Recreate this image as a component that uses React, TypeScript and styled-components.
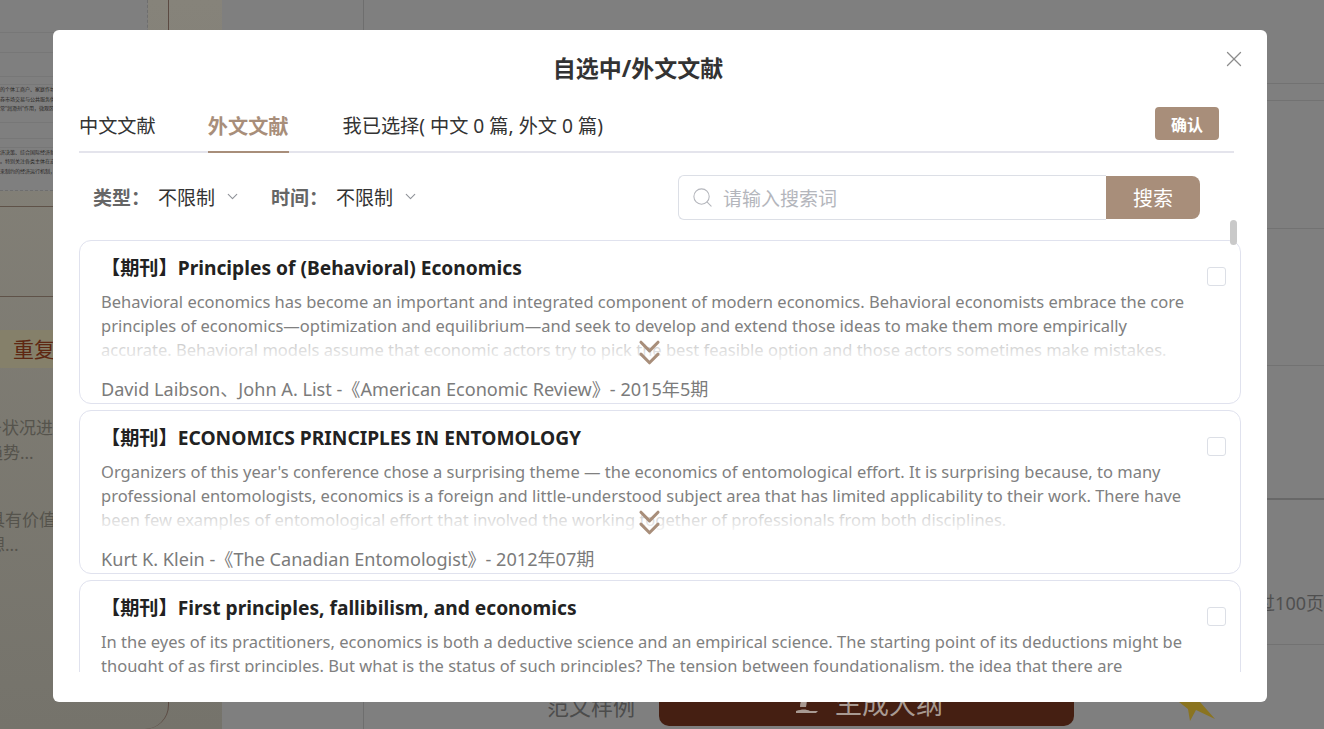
import styled, { createGlobalStyle } from "styled-components";
import { ChevronDown, ChevronsDown, Search, X } from "lucide-react";

const cnFont = `"Noto Sans", "Noto Sans CJK SC", sans-serif`;
const accent = "#a88e7a";

const GlobalStyle = createGlobalStyle`
  html, body { margin: 0; padding: 0; height: 100%; overflow: hidden; }
  body { font-family: ${cnFont}; background: #7f7f7f; }
  * { box-sizing: border-box; }
`;

type Article = {
  id: number;
  title: string;
  lines: string[];
  source: string;
  collapsed: boolean;
};

const articles: Article[] = [
  {
    id: 1,
    title: "【期刊】Principles of (Behavioral) Economics",
    lines: [
      "Behavioral economics has become an important and integrated component of modern economics. Behavioral economists embrace the core",
      "principles of economics—optimization and equilibrium—and seek to develop and extend those ideas to make them more empirically",
      "accurate. Behavioral models assume that economic actors try to pick the best feasible option and those actors sometimes make mistakes.",
    ],
    source: "David Laibson、John A. List -《American Economic Review》- 2015年5期",
    collapsed: true,
  },
  {
    id: 2,
    title: "【期刊】ECONOMICS PRINCIPLES IN ENTOMOLOGY",
    lines: [
      "Organizers of this year's conference chose a surprising theme — the economics of entomological effort. It is surprising because, to many",
      "professional entomologists, economics is a foreign and little-understood subject area that has limited applicability to their work. There have",
      "been few examples of entomological effort that involved the working together of professionals from both disciplines.",
    ],
    source: "Kurt K. Klein -《The Canadian Entomologist》- 2012年07期",
    collapsed: true,
  },
  {
    id: 3,
    title: "【期刊】First principles, fallibilism, and economics",
    lines: [
      "In the eyes of its practitioners, economics is both a deductive science and an empirical science. The starting point of its deductions might be",
      "thought of as first principles. But what is the status of such principles? The tension between foundationalism, the idea that there are",
    ],
    source: "",
    collapsed: false,
  },
];

/* page behind the mask */
const Page = styled.div`
  display: flex;
  width: 1324px;
  height: 729px;
  overflow: hidden;
  background: #7f7f7f;
`;

const LeftPane = styled.div`
  width: 222px;
  height: 729px;
  flex: none;
  background: linear-gradient(180deg, #86837a 0%, #75736b 100%);
`;

const PaperColumn = styled.div`
  width: 169px;
  height: 729px;
  border-right: 1px solid #5b4a42;
  border-bottom-right-radius: 24px;
  overflow: hidden;
`;

const Paper = styled.div`
  width: 148px;
  height: 191px;
  background: #7f7f7f;
  border-right: 1px dashed #6e6e6e;
  border-bottom: 1px dashed #6e6e6e;
  overflow: hidden;
`;

const PaperField = styled.div<{ $h: number }>`
  height: ${(p) => p.$h}px;
  border-bottom: 1px solid #777;
`;

const PaperLine = styled.div`
  font-size: 5px;
  line-height: 9.5px;
  white-space: nowrap;
  color: #2a2826;
`;

const PaperRule = styled.div<{ $top: number }>`
  height: 1px;
  margin-top: ${(p) => p.$top}px;
  background: #5f5248;
`;

const Tag = styled.div`
  width: 90px;
  height: 38px;
  margin-top: 33px;
  padding-left: 12px;
  border: 1px solid #85806a;
  border-radius: 0 8px 8px 0;
  background: #85806a;
  color: #5e2712;
  font-size: 21px;
  line-height: 36px;
`;

const SideText = styled.div<{ $top: number; $left: number }>`
  margin: ${(p) => p.$top}px 0 0 ${(p) => p.$left}px;
  width: 190px;
  height: 25px;
  font-size: 17px;
  line-height: 25px;
  color: #55534c;
  white-space: nowrap;
`;

const MainPane = styled.div`
  flex: 1;
  display: flex;
  flex-direction: column;
`;

const MainBody = styled.div`
  flex: 1;
  display: flex;
`;

const Rail = styled.div`
  width: 142px;
  flex: none;
  border-right: 1px solid #6e6e6e;
`;

const Rows = styled.div`
  flex: 1;
  margin-left: 23px;
`;

const Row = styled.div<{ $h: number; $dark?: boolean }>`
  height: ${(p) => p.$h}px;
  border-bottom: ${(p) => (p.$dark ? "2px solid #686868" : "1px solid #727272")};
`;

const Note = styled.div`
  padding-top: 90px;
  text-align: right;
  font-size: 18px;
  line-height: 26px;
  color: #4f4f4f;
`;

const BottomBar = styled.div`
  height: 70px;
  flex: none;
  margin-top: -70px;
  display: flex;
  padding-left: 325px;
  position: relative;
`;

const SampleLink = styled.div`
  width: 112px;
  padding-top: 30px;
  font-size: 22px;
  color: #4c4c4c;
`;

const GenerateButton = styled.div`
  width: 415px;
  height: 68px;
  margin-top: -1px;
  padding: 31px 0 0 135px;
  display: flex;
  gap: 15px;
  border-radius: 10px;
  background: #451f12;
  color: #a89a92;
  font-size: 27px;
  line-height: 30px;
`;

const StarSlot = styled.div`
  padding: 22px 0 0 103px;
`;

/* dialog */
const Mask = styled.div`
  position: fixed;
  inset: 0;
  padding: 30px 0 0 53px;
`;

const Dialog = styled.div`
  position: relative;
  width: 1214px;
  height: 672px;
  padding: 0 26px 0 26px;
  border-radius: 6px;
  background: #fff;
`;

const DialogTitle = styled.h2`
  margin: 0;
  padding: 21px 44px 0 0;
  height: 68px;
  text-align: center;
  font-size: 23px;
  line-height: 34px;
  font-weight: 700;
  color: #333;
`;

const CloseButton = styled.button`
  position: absolute;
  top: 16px;
  right: 20px;
  width: 26px;
  height: 26px;
  padding: 0;
  border: 0;
  background: none;
  color: #8c8c8c;
  display: flex;
`;

const TabBar = styled.div`
  display: flex;
  align-items: flex-end;
  height: 55px;
  width: 1155px;
  border-bottom: 2px solid #e4e4ec;
`;

const Tab = styled.div<{ $active?: boolean; $gap: number }>`
  height: 55px;
  margin: 0 0 -2px ${(p) => p.$gap}px;
  padding-top: 12px;
  font-size: ${(p) => (p.$active ? "20.2px" : "19.2px")};
  line-height: 32px;
  font-weight: ${(p) => (p.$active ? 700 : 400)};
  color: ${(p) => (p.$active ? accent : "#333")};
  border-bottom: 2px solid ${(p) => (p.$active ? accent : "transparent")};
`;

const ConfirmButton = styled.button`
  align-self: flex-start;
  width: 64px;
  height: 33px;
  margin: 9px 15px 0 auto;
  padding: 0;
  border: 0;
  border-radius: 4px;
  background: ${accent};
  color: #fff;
  font-family: ${cnFont};
  font-size: 16px;
  font-weight: 700;
`;

const FilterBar = styled.div`
  display: flex;
  align-items: flex-start;
  height: 67px;
  padding: 22px 41px 0 14px;
`;

const FilterGroup = styled.div`
  display: flex;
  align-items: center;
  height: 43px;
  margin-right: 30px;
`;

const FilterLabel = styled.span`
  width: 65px;
  font-size: 19px;
  font-weight: 700;
  color: #666;
`;

const FilterValue = styled.span`
  font-size: 19px;
  color: #333;
  margin-right: 9px;
`;

const Chevron = styled(ChevronDown)`
  color: #909399;
`;

const SearchBox = styled.div`
  display: flex;
  height: 45px;
  margin-left: auto;
  width: 522px;
`;

const SearchField = styled.div`
  flex: 1;
  display: flex;
  align-items: center;
  gap: 9px;
  padding-left: 12px;
  border: 1px solid #dcdfe6;
  border-right: 0;
  border-radius: 6px 0 0 6px;
  color: #b4b6bc;
  font-size: 19px;
`;

const SearchButton = styled.div`
  width: 94px;
  height: 43px;
  margin-top: 1px;
  display: flex;
  align-items: center;
  justify-content: center;
  border-radius: 0 8px 8px 0;
  background: ${accent};
  color: #fff;
  font-size: 20px;
`;

const ListViewport = styled.div`
  height: 452px;
  width: 1162px;
  padding-top: 20px;
  overflow: hidden;
  display: flex;
  flex-direction: column;
  gap: 6px;
`;

const ScrollThumb = styled.div`
  position: absolute;
  top: 190px;
  left: 1177px;
  width: 7px;
  height: 25px;
  border-radius: 4px;
  background: #c9c9c9;
  z-index: 2;
`;

const Card = styled.article`
  position: relative;
  flex: none;
  height: 164px;
  padding: 13px 21px 0 21px;
  border: 1px solid #e0e2ee;
  border-radius: 12px;
  background: #fff;
`;

const CardTitle = styled.h3`
  margin: 0;
  height: 28px;
  font-size: 19.2px;
  line-height: 28px;
  font-weight: 700;
  color: #222;
  white-space: nowrap;
`;

const Abstract = styled.div`
  position: relative;
  height: 72px;
  margin-top: 8px;
  overflow: hidden;
  font-size: 16.5px;
  line-height: 24px;
  color: #808080;
  white-space: nowrap;
`;

const Fade = styled.div`
  position: absolute;
  left: 0;
  right: 0;
  bottom: 0;
  height: 26px;
  background: linear-gradient(180deg, rgba(255, 255, 255, 0.45), rgba(255, 255, 255, 0.95));
`;

const Expand = styled(ChevronsDown)`
  position: absolute;
  left: 549px;
  top: 91px;
  color: ${accent};
`;

const Source = styled.div`
  margin-top: 14px;
  font-size: 18.1px;
  line-height: 26px;
  color: #7b7b7b;
  white-space: nowrap;
`;

const CheckBox = styled.span`
  position: absolute;
  top: 26px;
  right: 14px;
  width: 19px;
  height: 19px;
  border: 1px solid #dcdfe6;
  border-radius: 3px;
  background: #fff;
`;

const ArticleCard = ({ article }: { article: Article }) => {
  return (
    <Card>
      <CardTitle>{article.title}</CardTitle>
      <Abstract>
        {article.lines.map((line) => (
          <div key={line}>{line}</div>
        ))}
        {article.collapsed && <Fade />}
      </Abstract>
      {article.collapsed && <Expand size={41} strokeWidth={1.8} />}
      <Source>{article.source}</Source>
      <CheckBox />
    </Card>
  );
};

const Backdrop = () => {
  return (
    <Page>
      <LeftPane>
        <PaperColumn>
          <Paper>
            <PaperField $h={33} />
            <PaperField $h={20} />
            <PaperField $h={24} />
            <PaperField $h={8} />
            <PaperLine>的个体工商户、家庭作坊及小微企业主在</PaperLine>
            <PaperLine>券市场交易与公共服务供给中的地位</PaperLine>
            <PaperLine>常"润滑剂"作用，微观区域经济的活力</PaperLine>
            <PaperField $h={9} />
            <PaperField $h={16} />
            <PaperField $h={9} />
            <PaperLine>济决策、综合国际经济新形势的</PaperLine>
            <PaperLine>。特别关注各类主体在宏观环境下</PaperLine>
            <PaperLine>来制约的经济运行机制，并分析其</PaperLine>
          </Paper>
          <PaperRule $top={15} />
          <PaperRule $top={89} />
          <Tag>重复率</Tag>
          <SideText $top={47} $left={-32}>财务状况进行</SideText>
          <SideText $top={0} $left={-14}>趋势...</SideText>
          <SideText $top={42} $left={-12}>具有价值的</SideText>
          <SideText $top={0} $left={-12}>想...</SideText>
        </PaperColumn>
      </LeftPane>
      <MainPane>
        <MainBody>
          <Rail />
          <Rows>
            <Row $h={84} />
            <Row $h={17} />
            <Row $h={128} />
            <Row $h={137} />
            <Row $h={134} $dark />
            <Row $h={145}>
              <Note>不超过100页</Note>
            </Row>
          </Rows>
        </MainBody>
        <BottomBar>
          <SampleLink>范文样例</SampleLink>
          <GenerateButton>
            <svg width="26" height="26" viewBox="0 0 26 26">
              <path d="M2 22 C8 20 12 20 16 22 L24 22 L22 24 L2 24 Z" fill="#a89a92" />
              <path d="M6 18 C6 12 9 7 13 4 C13 9 13 14 12 18 Z" fill="#a89a92" />
            </svg>
            生成大纲
          </GenerateButton>
          <StarSlot>
            <svg width="40" height="40" viewBox="0 0 40 40">
              <path d="M14 2 L19 15 L33 15 L23 21 L38 38 L19 29 L13 40 L11 28 L2 21 L10 15 Z" fill="#8a7420" />
            </svg>
          </StarSlot>
        </BottomBar>
      </MainPane>
    </Page>
  );
};

const App = () => {
  return (
    <>
      <GlobalStyle />
      <Backdrop />
      <Mask>
        <Dialog>
          <DialogTitle>自选中/外文文献</DialogTitle>
          <CloseButton aria-label="close">
            <X size={26} strokeWidth={1.2} />
          </CloseButton>
          <TabBar>
            <Tab $gap={0}>中文文献</Tab>
            <Tab $gap={52} $active>
              外文文献
            </Tab>
            <Tab $gap={54}>我已选择( 中文 0 篇, 外文 0 篇)</Tab>
            <ConfirmButton>确认</ConfirmButton>
          </TabBar>
          <FilterBar>
            <FilterGroup>
              <FilterLabel>类型：</FilterLabel>
              <FilterValue>不限制</FilterValue>
              <Chevron size={17} strokeWidth={1.6} />
            </FilterGroup>
            <FilterGroup>
              <FilterLabel>时间：</FilterLabel>
              <FilterValue>不限制</FilterValue>
              <Chevron size={17} strokeWidth={1.6} />
            </FilterGroup>
            <SearchBox>
              <SearchField>
                <Search size={23} strokeWidth={1.1} />
                请输入搜索词
              </SearchField>
              <SearchButton>搜索</SearchButton>
            </SearchBox>
          </FilterBar>
          <ScrollThumb />
          <ListViewport>
            {articles.map((article) => (
              <ArticleCard key={article.id} article={article} />
            ))}
          </ListViewport>
        </Dialog>
      </Mask>
    </>
  );
};

export default App;
